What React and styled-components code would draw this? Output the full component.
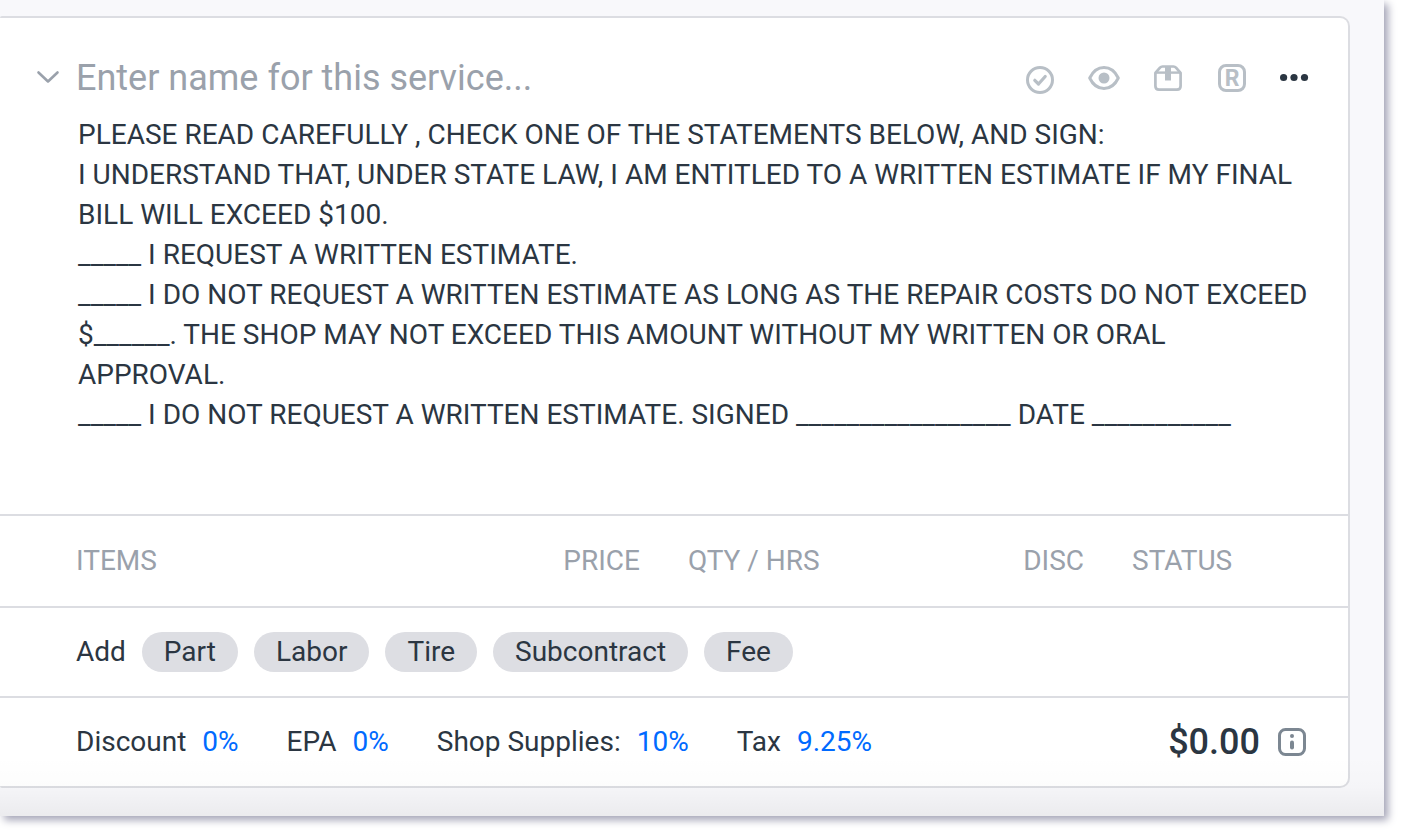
import React, { useState } from 'react'
import styled, { createGlobalStyle } from 'styled-components';

const DISCLAIMER = `PLEASE READ CAREFULLY , CHECK ONE OF THE STATEMENTS BELOW, AND SIGN:
I UNDERSTAND THAT, UNDER STATE LAW, I AM ENTITLED TO A WRITTEN ESTIMATE IF MY FINAL BILL WILL EXCEED $100.
_____ I REQUEST A WRITTEN ESTIMATE.
_____ I DO NOT REQUEST A WRITTEN ESTIMATE AS LONG AS THE REPAIR COSTS DO NOT EXCEED $______. THE SHOP MAY NOT EXCEED THIS AMOUNT WITHOUT MY WRITTEN OR ORAL APPROVAL.
_____ I DO NOT REQUEST A WRITTEN ESTIMATE. SIGNED _________________ DATE ___________`;

const itemTypes = ['Part', 'Labor', 'Tire', 'Subcontract', 'Fee'];

const rates = [
    { label: 'Discount', value: '0%' },
    { label: 'EPA', value: '0%' },
    { label: 'Shop Supplies:', value: '10%' },
    { label: 'Tax', value: '9.25%' },
];

function App() {
    const [name, setName] = useState('');
    const [note, setNote] = useState(DISCLAIMER);

    return (
        <>
            <GlobalStyle />
            <Sheet>
                <Card>
                    <Header>
                        <IconButton $color="#9aa1ab" aria-label="Collapse service">
                            <svg width="32" height="32" viewBox="0 0 32 32" fill="none" stroke="currentColor" strokeWidth="2.6" strokeLinecap="round" strokeLinejoin="round">
                                <path d="M6.500 10.500 16 19.500l9.500-9" />
                            </svg>
                        </IconButton>
                        <NameInput
                            aria-label="Service name"
                            placeholder="Enter name for this service..."
                            value={name}
                            onChange={(e) => setName(e.target.value)}
                        />
                        <Actions>
                            <IconButton aria-label="Approve">
                                <svg width="32" height="32" viewBox="0 0 32 32" fill="none" stroke="currentColor" strokeWidth="3" strokeLinecap="round" strokeLinejoin="round">
                                    <circle cx="16" cy="18" r="12.500" />
                                    <path d="m10.800 18.300 3.700 3.700 6.700-7.500" strokeWidth="3.200" />
                                </svg>
                            </IconButton>
                            <IconButton aria-label="Visibility">
                                <svg width="32" height="32" viewBox="0 0 32 32" fill="none" stroke="currentColor" strokeWidth="3" strokeLinejoin="round">
                                    <path d="M1.700 16C5 9 10 5.500 16 5.500S27 9 30.300 16C27 23 22 26.500 16 26.500S5 23 1.700 16z" />
                                    <circle cx="16" cy="16" r="5.500" fill="currentColor" stroke="none" />
                                </svg>
                            </IconButton>
                            <IconButton aria-label="Parts">
                                <svg width="32" height="32" viewBox="0 0 32 32" fill="none" stroke="currentColor" strokeWidth="2.700" strokeLinejoin="round">
                                    <path d="M3.400 11 8 5.600Q9 4.500 10.500 4.500h11q1.500 0 2.500 1.100L28.600 11V24q0 3.600-3.600 3.600H7q-3.600 0-3.600-3.600z" />
                                    <path d="M3.400 10.600h25.200" strokeWidth="2.400" />
                                    <path d="M13 4h6v14.500h-6z" fill="currentColor" stroke="none" />
                                </svg>
                            </IconButton>
                            <IconButton aria-label="Recommended">
                                <Badge>R</Badge>
                            </IconButton>
                            <IconButton $color="#2b3642" aria-label="More options">
                                <svg width="32" height="32" viewBox="0 0 32 32" fill="currentColor">
                                    <circle cx="3.600" cy="15.500" r="3.600" />
                                    <circle cx="14" cy="15.500" r="3.600" />
                                    <circle cx="24.500" cy="15.500" r="3.600" />
                                </svg>
                            </IconButton>
                        </Actions>
                    </Header>
                    <Note aria-label="Service note" rows={9} spellCheck={false} value={note} onChange={(e) => setNote(e.target.value)} />
                    <ItemsTable>
                        <thead>
                            <tr>
                                <Th scope="col">ITEMS</Th>
                                <Th scope="col" $width="164px" $align="right">PRICE</Th>
                                <Th scope="col" $width="280px">QTY / HRS</Th>
                                <Th scope="col" $width="164px" $align="right">DISC</Th>
                                <Th scope="col" $width="240px">STATUS</Th>
                            </tr>
                        </thead>
                    </ItemsTable>
                    <Row>
                        <AddGroup>
                            <span>Add</span>
                            {itemTypes.map((type) => (
                                <Chip key={type}>{type}</Chip>
                            ))}
                        </AddGroup>
                    </Row>
                    <Row>
                        <Rates>
                            {rates.map((rate) => (
                                <Rate key={rate.label}>
                                    {rate.label}
                                    <a href="#">{rate.value}</a>
                                </Rate>
                            ))}
                        </Rates>
                        <Total>$0.00</Total>
                        <IconButton $color="#7c8792" aria-label="Total details">
                            <svg width="32" height="32" viewBox="0 0 32 32" fill="none" stroke="currentColor" strokeWidth="3" strokeLinecap="round">
                                <rect x="3.500" y="3.500" width="25" height="25" rx="6" />
                                <circle cx="16" cy="10" r="2" fill="currentColor" stroke="none" />
                                <path d="M16 16.500v5" strokeWidth="4" />
                            </svg>
                        </IconButton>
                    </Row>
                </Card>
            </Sheet>
        </>
    )
}

export default App;

const GlobalStyle = createGlobalStyle`
                * {
                    box-sizing: border-box;
                }
                body {
                    margin: 0;
                    background: white;
                    color: #2b3642;
                    font-family: Roboto, sans-serif;
                    font-size: 28px;
                    line-height: 40px;
                }
                button, input, textarea {
                    font: inherit;
                    color: inherit;
                }
                `
const Sheet = styled.main`
                position: relative;
                margin: 0 20px 20px 0;
                padding: 16px 34px 28px 0;
                background: #f8f8fb;
                box-shadow: 4px 4px 8px #a3a3b6;

                &::after {
                    content: '';
                    position: absolute;
                    left: 0;
                    right: 0;
                    bottom: 0;
                    height: 60px;
                    background: linear-gradient(rgba(0, 0, 0, 0), rgba(0, 0, 0, 0.01) 50%, rgba(0, 0, 0, 0.05));
                    pointer-events: none;
                }
                `
const Card = styled.section`
                background: white;
                border: 2px solid #dcdde2;
                border-left: none;
                border-radius: 2px 10px 10px 2px;
                `
const Header = styled.header`
                display: flex;
                align-items: center;
                gap: 12px;
                padding: 36px 36px 12px 32px;
                `
const NameInput = styled.input`
                flex: 1;
                min-width: 0;
                height: 48px;
                padding: 0;
                border: none;
                outline: none;
                background: none;
                font-size: 36px;

                &::placeholder {
                    color: #9aa1ab;
                    opacity: 1;
                }
                `
const Actions = styled.div`
                display: flex;
                align-items: center;
                gap: 32px;
                `
const IconButton = styled.button`
                display: flex;
                align-items: center;
                justify-content: center;
                flex: none;
                width: 32px;
                height: 32px;
                padding: 0;
                border: none;
                background: none;
                color: ${props => props.$color || '#b8bfc6'};
                cursor: pointer;
                `
const Badge = styled.span`
                width: 28px;
                height: 28px;
                border: 3px solid currentColor;
                border-radius: 8px;
                font-size: 23px;
                font-weight: 700;
                line-height: 24px;
                text-align: center;
                `
const Note = styled.textarea`
                display: block;
                width: 100%;
                padding: 1px 38px 39px 78px;
                border: none;
                outline: none;
                resize: none;
                overflow: hidden;
                background: none;
                `
const ItemsTable = styled.table`
                width: 100%;
                table-layout: fixed;
                border-collapse: separate;
                border-spacing: 0;
                border-top: 2px solid #dcdde2;
                `
const Th = styled.th`
                width: ${props => props.$width || 'auto'};
                height: 90px;
                padding: 0 24px;
                color: #9aa1ab;
                font-weight: 400;
                text-align: ${props => props.$align || 'left'};
                white-space: nowrap;

                &:first-child {
                    padding-left: 76px;
                }
                `
const Row = styled.div`
                display: flex;
                align-items: center;
                min-height: 90px;
                padding: 0 40px 0 76px;
                border-top: 2px solid #dcdde2;
                `
const AddGroup = styled.div`
                display: flex;
                flex-wrap: wrap;
                align-items: center;
                gap: 16px;
                `
const Chip = styled.button`
                height: 40px;
                padding: 0 22px;
                border: none;
                border-radius: 20px;
                background: #dddee3;
                cursor: pointer;
                `
const Rates = styled.div`
                display: flex;
                flex-wrap: wrap;
                flex: 1;
                gap: 0 48px;
                `
const Rate = styled.div`
                display: flex;
                gap: 16px;

                a {
                    color: #006aff;
                    text-decoration: none;
                }
                `
const Total = styled.strong`
                margin-right: 16px;
                font-size: 36px;
                font-weight: 500;
                `
